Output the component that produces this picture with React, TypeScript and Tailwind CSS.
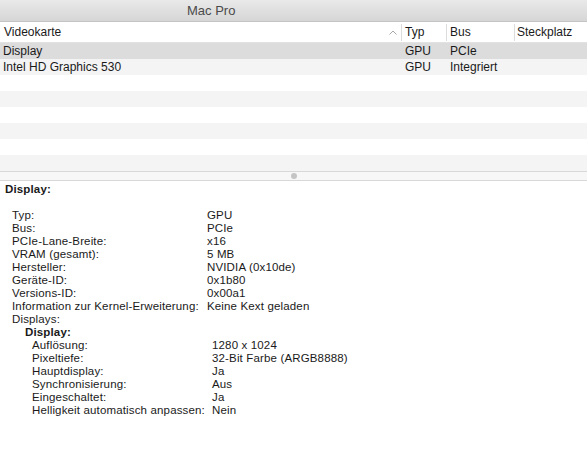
const font = { fontFamily: '"Liberation Sans", Arial, sans-serif' };

type Row = { label: string; value?: string; bold?: boolean; indent: number };

const details: Row[] = [
  { label: "Typ:", value: "GPU", indent: 12 },
  { label: "Bus:", value: "PCIe", indent: 12 },
  { label: "PCIe-Lane-Breite:", value: "x16", indent: 12 },
  { label: "VRAM (gesamt):", value: "5 MB", indent: 12 },
  { label: "Hersteller:", value: "NVIDIA (0x10de)", indent: 12 },
  { label: "Geräte-ID:", value: "0x1b80", indent: 12 },
  { label: "Versions-ID:", value: "0x00a1", indent: 12 },
  { label: "Information zur Kernel-Erweiterung:", value: "Keine Kext geladen", indent: 12 },
  { label: "Displays:", indent: 12 },
  { label: "Display:", bold: true, indent: 25 },
  { label: "Auflösung:", value: "1280 x 1024", indent: 32 },
  { label: "Pixeltiefe:", value: "32-Bit Farbe (ARGB8888)", indent: 32 },
  { label: "Hauptdisplay:", value: "Ja", indent: 32 },
  { label: "Synchronisierung:", value: "Aus", indent: 32 },
  { label: "Eingeschaltet:", value: "Ja", indent: 32 },
  { label: "Helligkeit automatisch anpassen:", value: "Nein", indent: 32 },
];

const App = () => {
  return (
    <div className="w-[587px] h-[471px] bg-white overflow-hidden text-[#1a1a1a]" style={font}>
      {/* title bar */}
      <div className="h-[22px] bg-gradient-to-b from-[#e9e9e9] to-[#d6d6d6] border-b border-[#c4c4c4] flex items-center">
        <span className="pl-[187px] text-[13px] text-[#4a4a4a]">Mac Pro</span>
      </div>

      {/* table header */}
      <div className="h-[21px] flex items-center text-[12px] border-b border-[#e2e2e2]">
        <div className="w-[401px] flex items-center justify-between pl-[4px] pr-[4px]">
          <span>Videokarte</span>
          <svg width="8" height="5" viewBox="0 0 8 5">
            <path d="M0.5 4.5 L4 1 L7.5 4.5" fill="none" stroke="#a8a8a8" strokeWidth="1" />
          </svg>
        </div>
        <div className="w-[45px] h-[17px] border-l border-[#dcdcdc] pl-[3px] flex items-center">Typ</div>
        <div className="w-[68px] h-[17px] border-l border-[#dcdcdc] pl-[3px] flex items-center">Bus</div>
        <div className="flex-1 h-[17px] border-l border-[#dcdcdc] pl-[2px] flex items-center">Steckplatz</div>
      </div>

      {/* table rows */}
      <div className="text-[12px]">
        <div className="h-[16px] bg-[#dcdcdc] flex items-center">
          <span className="w-[405px] pl-[3px]">Display</span>
          <span className="w-[45px]">GPU</span>
          <span>PCIe</span>
        </div>
        <div className="h-[16px] bg-[#f4f4f4] flex items-center">
          <span className="w-[405px] pl-[3px]">Intel HD Graphics 530</span>
          <span className="w-[45px]">GPU</span>
          <span>Integriert</span>
        </div>
        <div className="h-[16px] bg-white" />
        <div className="h-[16px] bg-[#f4f4f4]" />
        <div className="h-[16px] bg-white" />
        <div className="h-[16px] bg-[#f4f4f4]" />
        <div className="h-[16px] bg-white" />
        <div className="h-[16px] bg-[#f4f4f4]" />
      </div>

      {/* splitter */}
      <div className="h-[10px] bg-[#f7f7f7] border-y border-[#d8d8d8] flex items-center justify-center">
        <div className="w-[6px] h-[6px] rounded-full bg-[#c4c4c4]" />
      </div>

      {/* details */}
      <div className="pt-[2px] text-[11.5px] leading-[13px] tracking-[0.15px]">
        <div className="pl-[5px] font-bold h-[13px]">Display:</div>
        <div className="h-[13px]" />
        {details.map((r, i) => (
          <div key={i} className="flex h-[13px] whitespace-nowrap">
            {r.indent === 12 && <span className="pl-[12px] w-[207px] shrink-0">{r.label}</span>}
            {r.indent === 25 && <span className="pl-[25px] font-bold">{r.label}</span>}
            {r.indent === 32 && <span className="pl-[32px] w-[212px] shrink-0">{r.label}</span>}
            {r.value && <span>{r.value}</span>}
          </div>
        ))}
      </div>
    </div>
  );
};

export default App;
